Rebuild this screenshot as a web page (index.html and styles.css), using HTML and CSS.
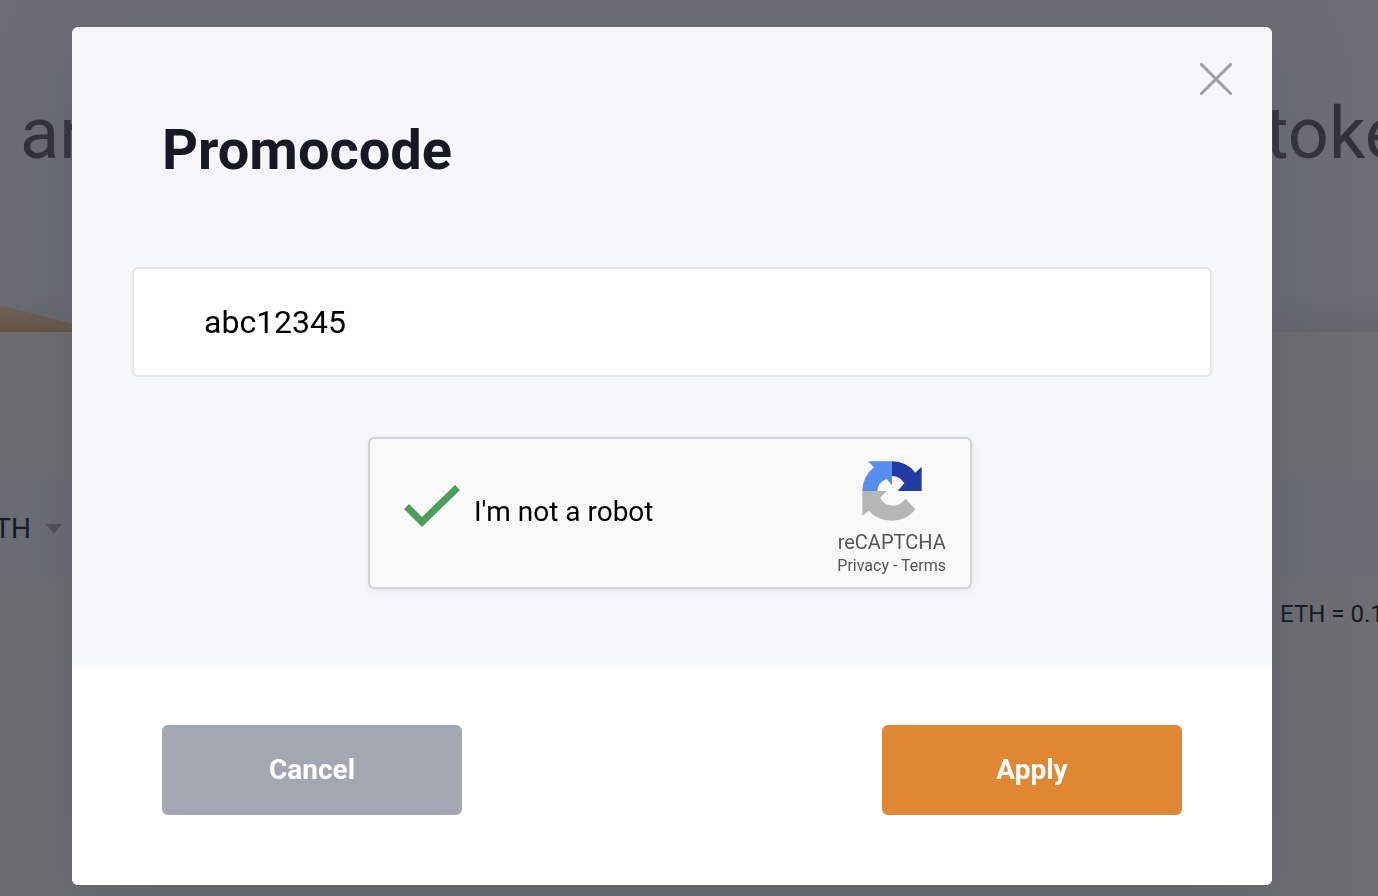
FILE: index.html
```html
<!DOCTYPE html>
<html lang="en">
<head>
<meta charset="utf-8">
<title>Promocode</title>
<link rel="stylesheet" href="styles.css">
</head>
<body>
<main class="page">
  <section class="hero">
    <div class="hero-title"><span>an</span><span class="hero-end">toke</span></div>
    <svg class="hero-wedge" viewBox="0 0 104 27" aria-hidden="true">
      <defs><linearGradient id="wedge" x1="0" y1="0" x2="0" y2="1"><stop offset="0" stop-color="#6f645b"/><stop offset="1" stop-color="#655543"/></linearGradient></defs>
      <path d="M0 0 104 27H0z" fill="url(#wedge)"/>
    </svg>
  </section>
  <section class="exchange">
    <div class="currency-row">
      <select class="currency" aria-label="Currency"><option>ETH</option></select>
      <svg class="caret" viewBox="0 0 16 10" aria-hidden="true"><path d="M0 0h16L8 10z" fill="#4e5057"/></svg>
    </div>
    <div class="rate">ETH = 0.1</div>
  </section>
</main>
<div class="overlay">
  <form class="modal" role="dialog" aria-labelledby="title">
    <div class="modal-body">
      <div class="modal-top">
        <h1 class="title" id="title">Promocode</h1>
        <button class="close" type="button" aria-label="Close">
          <svg class="close-icon" viewBox="0 0 32 32" aria-hidden="true"><path d="M1.5 1.5l29 29M30.5 1.5l-29 29" fill="none" stroke="#9c9ea5" stroke-width="3" stroke-linecap="round"/></svg>
        </button>
      </div>
      <input class="code" type="text" value="abc12345" aria-label="Promocode">
      <div class="captcha-row">
        <div class="captcha">
          <label class="robot"><input class="check" type="checkbox" checked><span>I'm not a robot</span></label>
          <div class="brand">
            <svg class="logo" viewBox="126 94 180 180" aria-hidden="true">
              <path d="M144 95H216V167L200 148Q174 157 172 184H127Q128 140 162 113z" fill="#558eee"/>
              <path d="M216 95Q261 96 286 129L305 111V184H233L253 161Q241 140 216 139z" fill="#233ba3"/>
              <path d="M127 184H200L180 205Q192 227 218 228Q242 227 256 207L286 239Q262 272 216 273Q172 272 146 243L127 258z" fill="#b6b6b6"/>
            </svg>
            <div class="brand-name">reCAPTCHA</div>
            <div class="links"><a href="#privacy">Privacy</a> - <a href="#terms">Terms</a></div>
          </div>
        </div>
      </div>
    </div>
    <div class="modal-footer">
      <button class="button cancel" type="button">Cancel</button>
      <button class="button apply" type="submit">Apply</button>
    </div>
  </form>
</div>
</body>
</html>
```

FILE: styles.css
```css
* {
  box-sizing: border-box;
}

body {
  margin: 0;
  overflow: hidden;
  background: #6d6e72;
  color: #151923;
  font-family: Roboto, "Liberation Sans", sans-serif;
}

button,
input,
select {
  font-family: inherit;
}

.page {
  min-height: 100vh;
  overflow: hidden;
}

.hero {
  display: flex;
  flex-direction: column;
  justify-content: space-between;
  height: 332px;
  padding-top: 92px;
  background: linear-gradient(to bottom, #6b6e75 290px, #64676f 332px);
}

.hero-title {
  display: flex;
  justify-content: space-between;
  padding-left: 20px;
  color: #303339;
  font-size: 72px;
  line-height: 84px;
  white-space: nowrap;
}

.hero-end {
  width: 113px;
}

.hero-wedge {
  display: block;
  width: 104px;
  height: 27px;
}

.exchange {
  padding-top: 146px;
}

.currency-row {
  display: flex;
  align-items: center;
  gap: 12px;
  height: 100px;
  padding-top: 2px;
  background: #6a6d75;
}

.currency {
  width: 56px;
  margin-left: -22px;
  padding: 0;
  border: 0;
  appearance: none;
  background: transparent;
  color: #151923;
  font-size: 28px;
  line-height: 36px;
}

.caret {
  width: 16px;
  height: 10px;
}

.rate {
  width: 98px;
  margin: 20px 0 0 auto;
  font-size: 24px;
  line-height: 32px;
  white-space: nowrap;
}

.overlay {
  position: fixed;
  inset: 0;
  padding: 27px 106px 11px 72px;
}

.modal {
  overflow: hidden;
  border-radius: 6px;
  background: #f5f7fb;
  box-shadow: 0 20px 80px rgba(72, 76, 88, 0.3);
}

.modal-body {
  padding: 36px 60px 76px;
}

.modal-top {
  display: flex;
  justify-content: space-between;
  align-items: flex-start;
  margin-right: -20px;
  padding-left: 30px;
}

.title {
  margin: 54px 0 84px;
  font-size: 56px;
  font-weight: 700;
  line-height: 66px;
}

.close {
  padding: 0;
  border: 0;
  background: transparent;
}

.close-icon {
  display: block;
  width: 32px;
  height: 32px;
}

.code {
  display: block;
  width: 100%;
  height: 110px;
  padding: 0 70px;
  border: 2px solid #e5e5e5;
  border-radius: 6px;
  background: #fff;
  color: #000;
  font-size: 32px;
}

.captcha-row {
  display: flex;
  justify-content: center;
  margin-top: 60px;
  padding-right: 4px;
}

.captcha {
  display: flex;
  justify-content: space-between;
  width: 604px;
  height: 152px;
  padding: 20px 24px 0 34px;
  border: 2px solid #d3d3d3;
  border-radius: 6px;
  background: #f9f9f9;
  box-shadow: 1px 2px 6px rgba(0, 0, 0, 0.08);
}

.robot {
  display: flex;
  align-items: center;
  gap: 14px;
  height: 106px;
  color: #000;
  font-size: 28px;
  line-height: 36px;
}

.check {
  width: 56px;
  height: 42px;
  margin: 0 0 12px;
  appearance: none;
}

.check:checked {
  background: #4a9e5e;
  clip-path: polygon(0 24px, 5px 19px, 18px 32px, 51px 0, 56px 5px, 18px 42px);
}

.brand {
  display: flex;
  flex-direction: column;
  align-items: center;
  color: #555;
}

.logo {
  width: 60px;
  height: 60px;
  margin-top: 2px;
}

.brand-name {
  margin-top: 9px;
  font-size: 20px;
  line-height: 24px;
}

.links {
  font-size: 16px;
  line-height: 24px;
}

.links a {
  color: inherit;
  text-decoration: none;
}

.modal-footer {
  display: flex;
  justify-content: space-between;
  padding: 60px 90px 70px;
  background: #fff;
}

.button {
  width: 300px;
  height: 90px;
  padding: 0 0 2px;
  border: 0;
  border-radius: 6px;
  color: #fff;
  font-size: 28px;
  font-weight: 700;
}

.cancel {
  background: #a3a7b2;
}

.apply {
  background: #e08733;
}
```
